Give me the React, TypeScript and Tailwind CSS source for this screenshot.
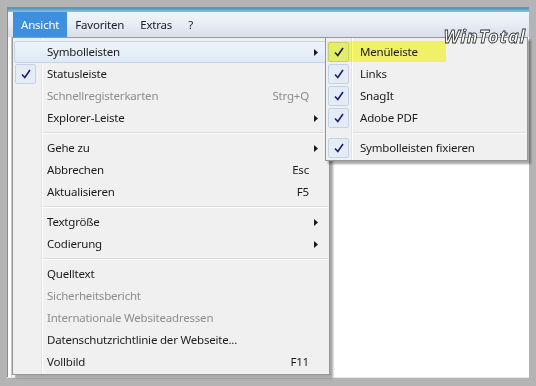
import React from 'react'

type Item =
  | { kind: 'sep' }
  | {
      kind?: 'item'
      label: string
      shortcut?: string
      arrow?: boolean
      checked?: boolean
      disabled?: boolean
      hover?: boolean
    }

const mainItems: Item[] = [
  { label: 'Symbolleisten', arrow: true, hover: true },
  { label: 'Statusleiste', checked: true },
  { label: 'Schnellregisterkarten', shortcut: 'Strg+Q', disabled: true },
  { label: 'Explorer-Leiste', arrow: true },
  { kind: 'sep' },
  { label: 'Gehe zu', arrow: true },
  { label: 'Abbrechen', shortcut: 'Esc' },
  { label: 'Aktualisieren', shortcut: 'F5' },
  { kind: 'sep' },
  { label: 'Textgröße', arrow: true },
  { label: 'Codierung', arrow: true },
  { kind: 'sep' },
  { label: 'Quelltext' },
  { label: 'Sicherheitsbericht', disabled: true },
  { label: 'Internationale Websiteadressen', disabled: true },
  { label: 'Datenschutzrichtlinie der Webseite...' },
  { label: 'Vollbild', shortcut: 'F11' },
]

const subItems: Item[] = [
  { label: 'Menüleiste', checked: true },
  { label: 'Links', checked: true },
  { label: 'SnagIt', checked: true },
  { label: 'Adobe PDF', checked: true },
  { kind: 'sep' },
  { label: 'Symbolleisten fixieren', checked: true },
]

const Check = () => (
  <svg width="12" height="12" viewBox="0 0 12 12">
    <path d="M2 6.5 L4.8 9.5 L10 2" fill="none" stroke="#1c1c78" strokeWidth="1.6" />
  </svg>
)

const Arrow = () => (
  <svg width="4" height="7" viewBox="0 0 4 7">
    <path d="M0 0 L4 3.5 L0 7 Z" fill="#1a1a1a" />
  </svg>
)

const MenuRows: React.FC<{ items: Item[]; col: number }> = ({ items, col }) => (
  <>
    {items.map((it, i) => {
      if (it.kind === 'sep') {
        return (
          <div key={i} className="flex h-[8px] items-center">
            <div style={{ width: col }} className="shrink-0" />
            <div className="flex-1">
              <div className="h-px bg-[#dcdcdc]" />
              <div className="h-px bg-white" />
            </div>
          </div>
        )
      }
      return (
        <div
          key={i}
          className={`relative flex h-[22px] items-center ${
            it.hover
              ? 'rounded-[2px] border border-[#c4d3e6] bg-gradient-to-b from-[#eef4fb] to-[#dfe9f5]'
              : 'border border-transparent'
          }`}
        >
          <div style={{ width: col }} className="flex h-full shrink-0 items-center">
            {it.checked && (
              <div className="flex h-[20px] w-[21px] items-center justify-center rounded-[2px] border border-[#c3d3e7] bg-[#e4ecf6]">
                <Check />
              </div>
            )}
          </div>
          <span className={`flex-1 pl-[6px] ${it.disabled ? 'text-[#8d8d8d]' : 'text-[#1b1b1b]'}`}>
            {it.label}
          </span>
          {it.shortcut && (
            <span className={`pr-[18px] ${it.disabled ? 'text-[#8d8d8d]' : 'text-[#1b1b1b]'}`}>
              {it.shortcut}
            </span>
          )}
          {it.arrow && (
            <span className="pr-[9px]">
              <Arrow />
            </span>
          )}
        </div>
      )
    })}
  </>
)

export default function App() {
  return (
    <div
      className="relative h-[386px] w-[536px] overflow-hidden bg-[#b4b4b4] pb-[9px] pl-[7px] pr-[7px] pt-[7px] text-[11.5px] tracking-[-0.2px]"
      style={{ fontFamily: '"Noto Sans", "Open Sans", sans-serif' }}
    >
      <div className="flex h-full flex-col border-l border-t border-[#8c8c8c] bg-white">
        <div className="h-[4px] bg-gradient-to-b from-[#4f93b8] to-[#8cc3dc]" />
        <div className="flex h-[25px] items-stretch bg-gradient-to-b from-[#f1f5fa] via-[#e7edf6] to-[#d9dfeb]">
          <div className="flex w-[5px]" />
          <div className="flex items-center bg-[#3f8fdf] px-[8px] text-white">Ansicht</div>
          <div className="flex items-center px-[8px] text-[#1b1b1b]">Favoriten</div>
          <div className="flex items-center px-[8px] text-[#1b1b1b]">Extras</div>
          <div className="flex items-center px-[8px] text-[#1b1b1b]">?</div>
        </div>
        <div className="flex flex-1">
          <div className="w-[4px] border-r border-[#c8c8c8]" />
        </div>
      </div>
      <div className="pointer-events-none absolute bottom-[8px] left-[7px] right-[7px] h-px bg-[#e8e8e8]" />

      <div className="absolute left-[12px] top-[37px] w-[318px] border border-[#979797] bg-[#f0f0f0] p-[1px] pt-[3px] shadow-[3px_3px_2px_rgba(0,0,0,0.35)]">
        <div className="pointer-events-none absolute bottom-0 left-[28px] top-0 w-px bg-[#e2e3e3]" />
        <div className="pointer-events-none absolute bottom-0 left-[29px] top-0 w-px bg-white" />
        <MenuRows items={mainItems} col={26} />
      </div>

      <div className="absolute left-[325px] top-[37px] w-[203px] border border-[#979797] bg-[#f0f0f0] p-[1px] pt-[3px] shadow-[3px_3px_2px_rgba(0,0,0,0.35)]">
        <div className="pointer-events-none absolute bottom-0 left-[25px] top-0 w-px bg-[#e2e3e3]" />
        <div className="pointer-events-none absolute bottom-0 left-[26px] top-0 w-px bg-white" />
        <MenuRows items={subItems} col={26} />
      </div>

      <div className="pointer-events-none absolute left-[327px] top-[41px] h-[21px] w-[119px] bg-[#ffff70] mix-blend-multiply" />

      <span className="pointer-events-none absolute right-[10px] top-[23px] text-[18px] font-bold italic tracking-[1px] text-white [-webkit-text-stroke:0.8px_#2a2a2a]">
        WinTotal
      </span>
    </div>
  )
}
